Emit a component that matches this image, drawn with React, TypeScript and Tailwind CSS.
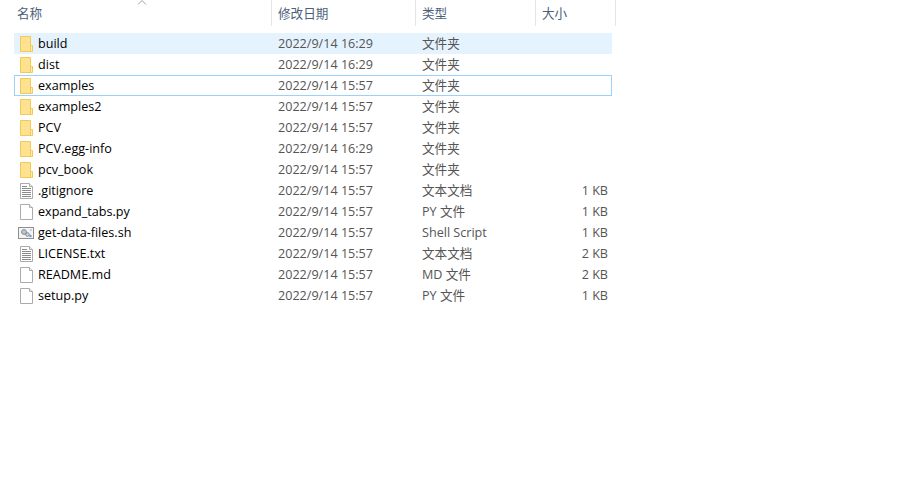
import type { ReactNode } from "react";

type Kind = "folder" | "text" | "blank" | "script";

interface Row {
  name: string;
  date: string;
  type: string;
  size?: string;
  kind: Kind;
  rowClass?: string;
}

const rows: Row[] = [
  { name: "build", date: "2022/9/14 16:29", type: "文件夹", kind: "folder", rowClass: "bg-[#e5f3ff]" },
  { name: "dist", date: "2022/9/14 16:29", type: "文件夹", kind: "folder" },
  { name: "examples", date: "2022/9/14 15:57", type: "文件夹", kind: "folder", rowClass: "shadow-[inset_0_0_0_1px_#99d1ff]" },
  { name: "examples2", date: "2022/9/14 15:57", type: "文件夹", kind: "folder" },
  { name: "PCV", date: "2022/9/14 15:57", type: "文件夹", kind: "folder" },
  { name: "PCV.egg-info", date: "2022/9/14 16:29", type: "文件夹", kind: "folder" },
  { name: "pcv_book", date: "2022/9/14 15:57", type: "文件夹", kind: "folder" },
  { name: ".gitignore", date: "2022/9/14 15:57", type: "文本文档", size: "1 KB", kind: "text" },
  { name: "expand_tabs.py", date: "2022/9/14 15:57", type: "PY 文件", size: "1 KB", kind: "blank" },
  { name: "get-data-files.sh", date: "2022/9/14 15:57", type: "Shell Script", size: "1 KB", kind: "script" },
  { name: "LICENSE.txt", date: "2022/9/14 15:57", type: "文本文档", size: "2 KB", kind: "text" },
  { name: "README.md", date: "2022/9/14 15:57", type: "MD 文件", size: "2 KB", kind: "blank" },
  { name: "setup.py", date: "2022/9/14 15:57", type: "PY 文件", size: "1 KB", kind: "blank" },
];

function FileIcon({ kind }: { kind: Kind }) {
  if (kind === "folder") {
    return (
      <svg width="16" height="16" viewBox="0 0 16 16" className="shrink-0">
        <path d="M2.5 0.5h10v15h-10z" fill="#ffe28f" stroke="#f2c955" />
        <path d="M12.5 9.500h2v6h-2z" fill="#ffefb5" stroke="#f2c955" />
      </svg>
    );
  }
  if (kind === "script") {
    return (
      <svg width="16" height="16" viewBox="0 0 16 16" className="shrink-0">
        <rect x="0.5" y="2.5" width="15" height="11" fill="#f4f4f4" stroke="#8f8f8f" />
        <circle cx="6" cy="7" r="2.4" fill="#c4c9cf" stroke="#7d8791" />
        <circle cx="9.5" cy="9.500" r="1.8" fill="#d6d9dd" stroke="#7d8791" />
        <circle cx="12.500" cy="11" r="1.200" fill="#4f9fe0" />
        <path d="M12 5h2" stroke="#a9a9a9" />
      </svg>
    );
  }
  return (
    <svg width="16" height="16" viewBox="0 0 16 16" className="shrink-0">
      <path d="M2.5 0.5h9l3 3v12h-12z" fill="#fff" stroke="#ababab" />
      <path d="M11.500 0.500v3h3" fill="#f2f2f2" stroke="#ababab" />
      {kind === "text" && (
        <path d="M4 3.500h5M4 5.500h9M4 7.500h9M4 9.500h9M4 11.500h9M4 13.500h9" stroke="#8b8b8b" />
      )}
    </svg>
  );
}

function HeaderCell({ width, children }: { width: string; children: ReactNode }) {
  return (
    <div className={`${width} h-[26px] shrink-0 border-r border-[#e5e5e5] pl-[6px] pt-[3px]`}>
      {children}
    </div>
  );
}

export default function App() {
  return (
    <div
      className="h-[484px] w-[924px] overflow-hidden bg-white text-[12.6px] leading-[21px] text-[#555]"
      style={{ fontFamily: '"Open Sans", "Noto Sans CJK SC", sans-serif' }}
    >
      <div className="relative flex h-[33px] items-start pl-[11px] text-[#4c607a]">
        <svg width="10" height="5" viewBox="0 0 10 5" className="absolute left-[137px] top-0">
          <path d="M1 4.500L5 0.500L9 4.500" fill="none" stroke="#a0a0a0" />
        </svg>
        <HeaderCell width="w-[261px]">名称</HeaderCell>
        <HeaderCell width="w-[144px]">修改日期</HeaderCell>
        <HeaderCell width="w-[120px]">类型</HeaderCell>
        <HeaderCell width="w-[80px]">大小</HeaderCell>
      </div>

      <div className="ml-[14px] w-[598px]">
        {rows.map((row) => (
          <div key={row.name} className={`flex h-[21px] items-center px-px ${row.rowClass ?? ""}`}>
            <div className="flex w-[263px] shrink-0 items-center gap-[4px] pl-[3px] text-black">
              <FileIcon kind={row.kind} />
              <span>{row.name}</span>
            </div>
            <div className="w-[144px] shrink-0">{row.date}</div>
            <div className="w-[100px] shrink-0">{row.type}</div>
            <div className="w-[86px] shrink-0 text-right">{row.size}</div>
          </div>
        ))}
      </div>
    </div>
  );
}
